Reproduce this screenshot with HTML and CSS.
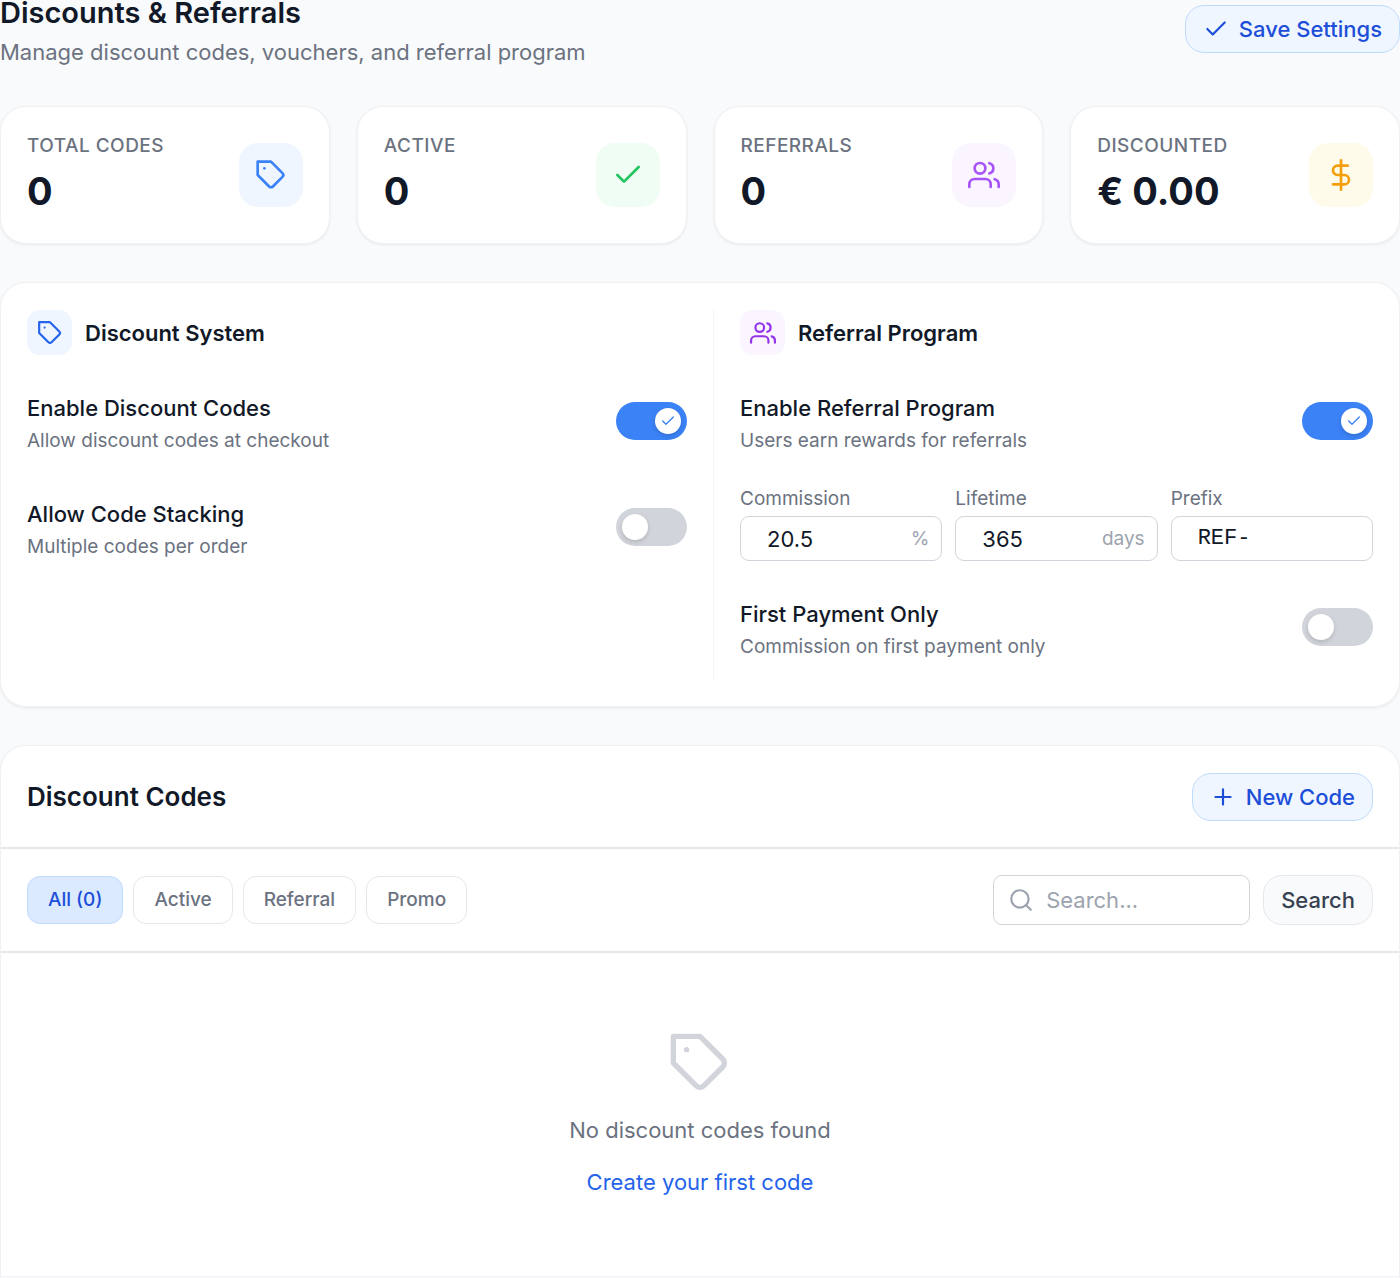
FILE: index.html
```html
<!DOCTYPE html>
<html lang="en">
<head>
<meta charset="utf-8">
<meta name="viewport" content="width=device-width, initial-scale=1">
<title>Discounts &amp; Referrals</title>
<link rel="stylesheet" href="styles.css">
</head>
<body>
<svg class="sprite" aria-hidden="true">
  <symbol id="tag" viewBox="0 0 24 24"><path d="M20.59 13.41l-7.17 7.17a2 2 0 0 1-2.83 0L2 12V2h10l8.59 8.59a2 2 0 0 1 0 2.82z"/><path d="M7 7h.01"/></symbol>
  <symbol id="check" viewBox="0 0 24 24"><path d="M20 6L9 17l-5-5"/></symbol>
  <symbol id="users" viewBox="0 0 24 24"><path d="M17 21v-2a4 4 0 0 0-4-4H5a4 4 0 0 0-4 4v2"/><circle cx="9" cy="7" r="4"/><path d="M23 21v-2a4 4 0 0 0-3-3.87"/><path d="M16 3.13a4 4 0 0 1 0 7.75"/></symbol>
  <symbol id="dollar" viewBox="0 0 24 24"><path d="M12 1v22"/><path d="M17 5H9.5a3.5 3.5 0 0 0 0 7h5a3.5 3.5 0 0 1 0 7H6"/></symbol>
  <symbol id="plus" viewBox="0 0 24 24"><path d="M12 5v14M5 12h14"/></symbol>
  <symbol id="search" viewBox="0 0 24 24"><circle cx="11" cy="11" r="8"/><path d="M21 21l-4.35-4.35"/></symbol>
</svg>

<main class="page">
  <header class="page-header">
    <div>
      <h1 class="page-title">Discounts &amp; Referrals</h1>
      <p class="page-subtitle">Manage discount codes, vouchers, and referral program</p>
    </div>
    <div class="page-actions">
      <button class="btn btn-primary" type="button"><svg class="icon icon-sm"><use href="#check"/></svg>Save Settings</button>
    </div>
  </header>

  <section class="stats">
    <article class="card stat">
      <div><p class="stat-label">Total codes</p><p class="stat-value">0</p></div>
      <span class="tile tile-lg blue"><svg class="icon icon-md"><use href="#tag"/></svg></span>
    </article>
    <article class="card stat">
      <div><p class="stat-label">Active</p><p class="stat-value">0</p></div>
      <span class="tile tile-lg green"><svg class="icon icon-md"><use href="#check"/></svg></span>
    </article>
    <article class="card stat">
      <div><p class="stat-label">Referrals</p><p class="stat-value">0</p></div>
      <span class="tile tile-lg purple"><svg class="icon icon-md"><use href="#users"/></svg></span>
    </article>
    <article class="card stat">
      <div><p class="stat-label">Discounted</p><p class="stat-value">€ 0.00</p></div>
      <span class="tile tile-lg amber"><svg class="icon icon-md"><use href="#dollar"/></svg></span>
    </article>
  </section>

  <section class="card settings">
    <div class="settings-column">
      <div class="group-head">
        <span class="tile tile-sm blue-deep"><svg class="icon icon-sm"><use href="#tag"/></svg></span>
        <h2 class="group-title">Discount System</h2>
      </div>
      <div class="options">
        <div class="option">
          <div>
            <label class="option-title" for="enable-codes">Enable Discount Codes</label>
            <p class="option-hint">Allow discount codes at checkout</p>
          </div>
          <span class="toggle"><input id="enable-codes" class="toggle-input" type="checkbox" checked><span class="toggle-knob"><svg class="icon icon-xs"><use href="#check"/></svg></span></span>
        </div>
        <div class="option">
          <div>
            <label class="option-title" for="stacking">Allow Code Stacking</label>
            <p class="option-hint">Multiple codes per order</p>
          </div>
          <span class="toggle"><input id="stacking" class="toggle-input" type="checkbox"><span class="toggle-knob"><svg class="icon icon-xs"><use href="#check"/></svg></span></span>
        </div>
      </div>
    </div>

    <div class="settings-column divided">
      <div class="group-head">
        <span class="tile tile-sm purple-deep"><svg class="icon icon-sm"><use href="#users"/></svg></span>
        <h2 class="group-title">Referral Program</h2>
      </div>
      <div class="option">
        <div>
          <label class="option-title" for="enable-referral">Enable Referral Program</label>
          <p class="option-hint">Users earn rewards for referrals</p>
        </div>
        <span class="toggle"><input id="enable-referral" class="toggle-input" type="checkbox" checked><span class="toggle-knob"><svg class="icon icon-xs"><use href="#check"/></svg></span></span>
      </div>
      <div class="fields">
        <div class="field">
          <label class="field-label" for="commission">Commission</label>
          <div class="field-box"><input id="commission" class="field-input" type="text" inputmode="decimal" value="20.5"><span class="field-unit">%</span></div>
        </div>
        <div class="field">
          <label class="field-label" for="lifetime">Lifetime</label>
          <div class="field-box"><input id="lifetime" class="field-input" type="text" inputmode="numeric" value="365"><span class="field-unit">days</span></div>
        </div>
        <div class="field">
          <label class="field-label" for="prefix">Prefix</label>
          <div class="field-box"><input id="prefix" class="field-input mono" type="text" value="REF-"></div>
        </div>
      </div>
      <div class="option">
        <div>
          <label class="option-title" for="first-payment">First Payment Only</label>
          <p class="option-hint">Commission on first payment only</p>
        </div>
        <span class="toggle"><input id="first-payment" class="toggle-input" type="checkbox"><span class="toggle-knob"><svg class="icon icon-xs"><use href="#check"/></svg></span></span>
      </div>
    </div>
  </section>

  <section class="card codes">
    <div class="codes-head">
      <h2 class="codes-title">Discount Codes</h2>
      <button class="btn btn-primary" type="button"><svg class="icon icon-sm"><use href="#plus"/></svg>New Code</button>
    </div>
    <div class="codes-bar">
      <div class="chips">
        <button class="chip chip-active" type="button">All (0)</button>
        <button class="chip" type="button">Active</button>
        <button class="chip" type="button">Referral</button>
        <button class="chip" type="button">Promo</button>
      </div>
      <form class="search">
        <div class="search-box">
          <svg class="icon icon-sm"><use href="#search"/></svg>
          <input class="search-input" type="text" placeholder="Search..." aria-label="Search codes">
        </div>
        <button class="btn btn-neutral" type="button">Search</button>
      </form>
    </div>
    <div class="empty">
      <svg class="icon icon-xl"><use href="#tag"/></svg>
      <p class="empty-text">No discount codes found</p>
      <a class="empty-link" href="#new-code">Create your first code</a>
    </div>
  </section>
</main>
</body>
</html>
```
FILE: styles.css
```css
* { box-sizing: border-box; }

body {
  margin: 0;
  background: #f9fafc;
  color: #111827;
  font-family: Inter, "Liberation Sans", sans-serif;
  font-size: 22px;
  line-height: 32px;
}

h1, h2, p { margin: 0; }
button, input { font: inherit; color: inherit; }
button { cursor: pointer; }

.sprite { display: none; }

.icon {
  flex: none;
  fill: none;
  stroke: currentColor;
  stroke-width: 2;
  stroke-linecap: round;
  stroke-linejoin: round;
}
.icon-xs { width: 16px; height: 16px; }
.icon-sm { width: 26px; height: 26px; }
.icon-md { width: 32px; height: 32px; }
.icon-xl { width: 64px; height: 64px; }

.page {
  display: flex;
  flex-direction: column;
  gap: 38px;
}

.page-header {
  display: flex;
  justify-content: space-between;
  align-items: flex-start;
}
.page-title { font-size: 29px; line-height: 26px; font-weight: 600; }
.page-subtitle { margin-top: 10px; color: #6b7280; }
.page-actions { padding-top: 5px; }

.btn {
  display: flex;
  align-items: center;
  gap: 10px;
  height: 48px;
  padding: 0 17px;
  border: 1px solid;
  border-radius: 19px;
  font-weight: 500;
}
.btn-primary { background: #eff6ff; border-color: #bfdbfe; color: #1d4ed8; }
.btn-neutral { height: 50px; background: #f9fafb; border-color: #e5e7eb; color: #374151; }

.card {
  background: #fff;
  border: 1px solid #f0f1f4;
  border-radius: 26px;
  box-shadow: 0 1px 3px rgba(0, 0, 0, 0.07);
}

.stats {
  display: grid;
  grid-template-columns: repeat(4, 1fr);
  gap: 27px;
}
.stat {
  display: flex;
  justify-content: space-between;
  align-items: center;
  padding: 26px;
}
.stat-label {
  color: #6b7280;
  font-size: 19px;
  line-height: 26px;
  font-weight: 500;
  letter-spacing: 0.025em;
  text-transform: uppercase;
}
.stat-value { margin-top: 6px; font-size: 38px; line-height: 52px; font-weight: 700; }

.tile { display: flex; align-items: center; justify-content: center; flex: none; }
.tile-lg { width: 64px; height: 64px; border-radius: 19px; }
.tile-sm { width: 45px; height: 45px; border-radius: 13px; }
.blue { background: #eff6ff; color: #3b82f6; }
.blue-deep { background: #eff6ff; color: #2563eb; }
.green { background: #f0fdf4; color: #22c55e; }
.purple { background: #faf5ff; color: #a855f7; }
.purple-deep { background: #faf5ff; color: #9333ea; }
.amber { background: #fffbeb; color: #f59e0b; }

.settings {
  display: grid;
  grid-template-columns: 1fr 1fr;
  gap: 26px;
  padding: 27px 26px;
}
.settings-column {
  display: flex;
  flex-direction: column;
  gap: 34px;
  padding-bottom: 21px;
}
.divided { border-left: 1px solid #f3f4f6; padding-left: 26px; }

.group-head { display: flex; align-items: center; gap: 13px; }
.group-title { font-size: 22px; line-height: 32px; font-weight: 600; }

.options { display: flex; flex-direction: column; gap: 43px; }
.option { display: flex; justify-content: space-between; align-items: center; }
.option-title { display: block; line-height: 38px; font-weight: 500; }
.option-hint { margin-top: 3px; color: #6b7280; font-size: 19px; line-height: 22px; }

.toggle { position: relative; display: flex; flex: none; }
.toggle-input {
  appearance: none;
  width: 71px;
  height: 38px;
  margin: 0;
  border-radius: 19px;
  background: #d1d5db;
  cursor: pointer;
}
.toggle-input:checked { background: #3b82f6; }
.toggle-knob {
  position: absolute;
  top: 6px;
  left: 6px;
  display: flex;
  align-items: center;
  justify-content: center;
  width: 26px;
  height: 26px;
  border-radius: 50%;
  background: #fff;
  box-shadow: 0 2px 4px rgba(0, 0, 0, 0.15);
  color: transparent;
  pointer-events: none;
}
.toggle-input:checked + .toggle-knob { left: 39px; color: #3b82f6; }

.fields { display: grid; grid-template-columns: repeat(3, 1fr); gap: 13px; }
.field { display: flex; flex-direction: column; gap: 4px; min-width: 0; }
.field-label { color: #6b7280; font-size: 19px; line-height: 26px; }
.field-box {
  display: flex;
  align-items: center;
  height: 45px;
  padding: 0 12px 0 26px;
  border: 1px solid #d1d5db;
  border-radius: 9px;
  background: #fff;
}
.field-input {
  flex: 1;
  min-width: 0;
  padding: 0;
  border: 0;
  outline: 0;
  background: transparent;
}
.field-unit { color: #9ca3af; font-size: 19px; }
.mono { font-family: "Courier New", "Liberation Mono", monospace; }

.codes { border-radius: 26px 26px 0 0; }
.codes-head {
  display: flex;
  justify-content: space-between;
  align-items: center;
  padding: 27px 26px 26px;
  border-bottom: 2px solid #e5e7eb;
}
.codes-title { font-size: 26px; line-height: 32px; font-weight: 600; }

.codes-bar {
  display: flex;
  justify-content: space-between;
  align-items: center;
  padding: 26px;
  border-bottom: 2px solid #e5e7eb;
}
.chips { display: flex; gap: 10px; }
.chip {
  height: 48px;
  padding: 0 20px;
  border: 1px solid #e5e7eb;
  border-radius: 13px;
  background: #fff;
  color: #6b7280;
  font-size: 19px;
  font-weight: 500;
}
.chip-active { background: #dbeafe; border-color: #bfdbfe; color: #1d4ed8; }

.search { display: flex; gap: 13px; }
.search-box {
  display: flex;
  align-items: center;
  gap: 12px;
  width: 257px;
  height: 50px;
  padding: 0 14px;
  border: 1px solid #d1d5db;
  border-radius: 9px;
  background: #fff;
  color: #9ca3af;
}
.search-input {
  flex: 1;
  min-width: 0;
  padding: 0;
  border: 0;
  outline: 0;
  background: transparent;
  color: #111827;
}
.search-input::placeholder { color: #9ca3af; opacity: 1; }

.empty {
  display: flex;
  flex-direction: column;
  align-items: center;
  padding: 78px 26px;
  color: #6b7280;
}
.empty .icon { color: #d1d5db; }
.empty-text { margin-top: 19px; }
.empty-link { margin-top: 20px; color: #2563eb; text-decoration: none; }
```
